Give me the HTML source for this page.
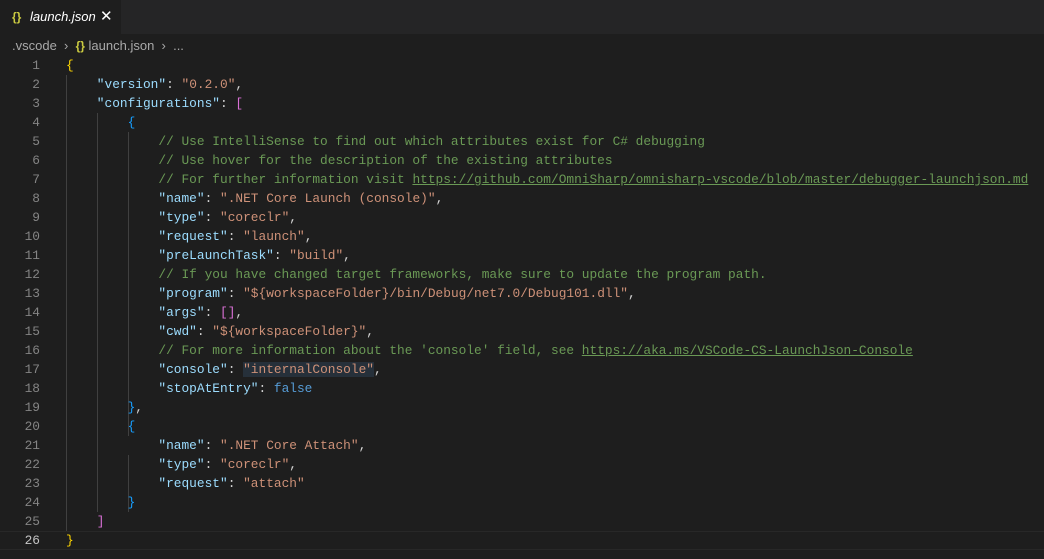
<!DOCTYPE html>
<html><head><meta charset="utf-8"><style>
body{margin:0;width:1044px;height:559px;background:#1e1e1e;overflow:hidden;font-family:"Liberation Sans",sans-serif;position:relative}
.tabbar{position:absolute;left:0;top:0;width:1044px;height:34px;background:#252526}
.tab{position:absolute;left:0;top:0;width:121px;height:34px;background:#1e1e1e;color:#fff;font-size:13px;font-style:italic;line-height:34px}
.br{position:absolute;left:12px;top:36px;height:20px;line-height:20px;font-size:13px;color:#a9a9a9}
.ic{color:#cbcb41;font-style:normal;font-weight:bold;font-size:12px}
.code{position:absolute;left:0;top:56px;width:1044px;font-family:"Liberation Mono",monospace;font-size:12.83px}
.l{height:19px;line-height:19px;white-space:pre;position:relative}
.n{position:absolute;left:0;width:40px;text-align:right;color:#858585}
.t{position:absolute;left:66px;color:#d4d4d4}
.k{color:#9cdcfe}.s{color:#ce9178}.c{color:#6a9955}.b{color:#569cd6}.u{text-decoration:underline}
.y{color:#ffd700}.p{color:#da70d6}.bl{color:#179fff}
.g{position:absolute;width:1px;background:#404040}
.cur{position:absolute;left:0;top:531px;width:1044px;height:17px;border-top:1px solid #282828;border-bottom:1px solid #282828}
</style></head><body>
<div class="tabbar"><div class="tab"><span class="ic" style="position:absolute;left:12px">{}</span><span style="position:absolute;left:30px">launch.json</span><span style="position:absolute;left:100px;font-style:normal;font-size:15px">✕</span></div></div>
<div class="br">.vscode &nbsp;›&nbsp; <span class="ic">{}</span> launch.json &nbsp;›&nbsp; ...</div>
<div class="cur"></div>
<div class="g" style="left:66px;top:75px;height:456px"></div>
<div class="g" style="left:97px;top:113px;height:399px"></div>
<div class="g" style="left:128px;top:132px;height:304px"></div>
<div class="g" style="left:128px;top:455px;height:57px"></div>
<div class="code">
<div class="l"><span class="n">1</span><span class="t"><span class="y">{</span></span></div>
<div class="l"><span class="n">2</span><span class="t">    <span class="k">"version"</span>: <span class="s">"0.2.0"</span>,</span></div>
<div class="l"><span class="n">3</span><span class="t">    <span class="k">"configurations"</span>: <span class="p">[</span></span></div>
<div class="l"><span class="n">4</span><span class="t">        <span class="bl">{</span></span></div>
<div class="l"><span class="n">5</span><span class="t">            <span class="c">// Use IntelliSense to find out which attributes exist for C# debugging</span></span></div>
<div class="l"><span class="n">6</span><span class="t">            <span class="c">// Use hover for the description of the existing attributes</span></span></div>
<div class="l"><span class="n">7</span><span class="t">            <span class="c">// For further information visit <span class="u">https://github.com/OmniSharp/omnisharp-vscode/blob/master/debugger-launchjson.md</span></span></span></div>
<div class="l"><span class="n">8</span><span class="t">            <span class="k">"name"</span>: <span class="s">".NET Core Launch (console)"</span>,</span></div>
<div class="l"><span class="n">9</span><span class="t">            <span class="k">"type"</span>: <span class="s">"coreclr"</span>,</span></div>
<div class="l"><span class="n">10</span><span class="t">            <span class="k">"request"</span>: <span class="s">"launch"</span>,</span></div>
<div class="l"><span class="n">11</span><span class="t">            <span class="k">"preLaunchTask"</span>: <span class="s">"build"</span>,</span></div>
<div class="l"><span class="n">12</span><span class="t">            <span class="c">// If you have changed target frameworks, make sure to update the program path.</span></span></div>
<div class="l"><span class="n">13</span><span class="t">            <span class="k">"program"</span>: <span class="s">"${workspaceFolder}/bin/Debug/net7.0/Debug101.dll"</span>,</span></div>
<div class="l"><span class="n">14</span><span class="t">            <span class="k">"args"</span>: <span class="p">[]</span>,</span></div>
<div class="l"><span class="n">15</span><span class="t">            <span class="k">"cwd"</span>: <span class="s">"${workspaceFolder}"</span>,</span></div>
<div class="l"><span class="n">16</span><span class="t">            <span class="c">// For more information about the 'console' field, see <span class="u">https://aka.ms/VSCode-CS-LaunchJson-Console</span></span></span></div>
<div class="l"><span class="n">17</span><span class="t">            <span class="k">"console"</span>: <span class="s" style="background:#26303a">"internalConsole"</span>,</span></div>
<div class="l"><span class="n">18</span><span class="t">            <span class="k">"stopAtEntry"</span>: <span class="b">false</span></span></div>
<div class="l"><span class="n">19</span><span class="t">        <span class="bl">}</span>,</span></div>
<div class="l"><span class="n">20</span><span class="t">        <span class="bl">{</span></span></div>
<div class="l"><span class="n">21</span><span class="t">            <span class="k">"name"</span>: <span class="s">".NET Core Attach"</span>,</span></div>
<div class="l"><span class="n">22</span><span class="t">            <span class="k">"type"</span>: <span class="s">"coreclr"</span>,</span></div>
<div class="l"><span class="n">23</span><span class="t">            <span class="k">"request"</span>: <span class="s">"attach"</span></span></div>
<div class="l"><span class="n">24</span><span class="t">        <span class="bl">}</span></span></div>
<div class="l"><span class="n">25</span><span class="t">    <span class="p">]</span></span></div>
<div class="l"><span class="n" style="color:#c6c6c6">26</span><span class="t"><span class="y">}</span></span></div>
</div>
</body></html>
